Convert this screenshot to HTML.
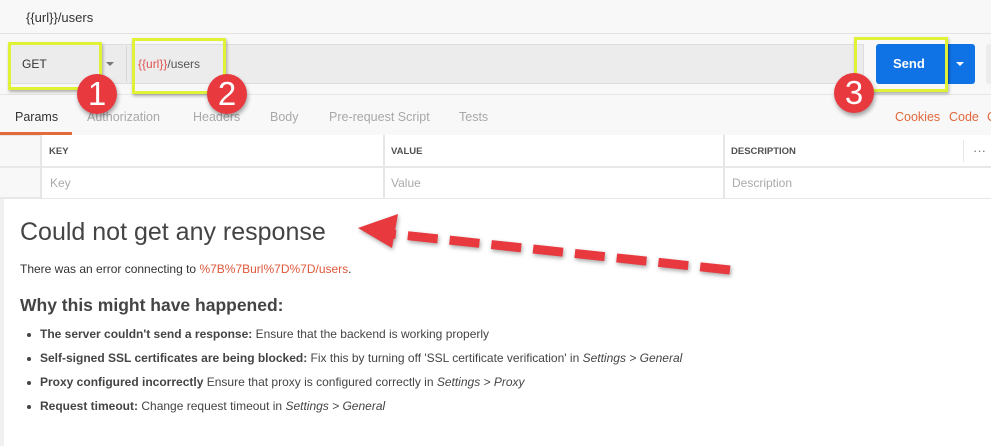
<!DOCTYPE html>
<html><head><meta charset="utf-8"><style>
*{margin:0;padding:0;box-sizing:border-box}
body{width:991px;height:446px;overflow:hidden;background:#fff;font-family:"Liberation Sans",sans-serif;position:relative;color:#333}
.a{position:absolute}
.tab{position:absolute;top:110px;font-size:12.5px;color:#a8a8a8}
.th{position:absolute;top:146px;font-size:9.5px;font-weight:bold;color:#505050}
.ph{position:absolute;top:176px;font-size:12px;color:#aaa}
.vl{position:absolute;width:2px;background:#e6e6e6}
.ybox{position:absolute;border:3px solid #dff236;box-shadow:1px 2px 3px rgba(0,0,0,.3)}
.circ{position:absolute;width:40px;height:40px;border-radius:50%;background:#e8393f;color:#fff;font-size:33px;text-align:center;line-height:40px;box-shadow:1px 3px 4px rgba(0,0,0,.35)}
li{list-style:none;position:absolute;left:29px;font-size:12px;color:#444}
li:before{content:"";position:absolute;left:-2px;top:6px;width:4px;height:4px;border-radius:50%;background:#444}
li span{margin-left:11px}
</style></head><body>
<div class="a" style="left:0;top:0;width:991px;height:199px;background:#f8f8f8"></div>
<div class="a" style="left:0;top:33px;width:991px;height:1px;background:#e2e2e2"></div>
<div class="a" style="left:26px;top:10px;font-size:13px;color:#333">{{url}}/users</div>
<div class="a" style="left:8px;top:44px;width:856px;height:40px;background:#ececec;border:1px solid #ddd"></div>
<div class="a" style="left:126px;top:46px;width:1px;height:36px;background:#d6d6d6"></div>
<div class="a" style="left:22px;top:57px;font-size:12px;color:#333">GET</div>
<div class="a" style="left:106px;top:62px;border-left:4px solid transparent;border-right:4px solid transparent;border-top:4px solid #777"></div>
<div class="a" style="left:138px;top:57px;font-size:12px;color:#555"><span style="color:#e0524f">{{url}}</span>/users</div>
<div class="a" style="left:876px;top:44px;width:99px;height:40px;background:#0f72e5;border-radius:3px"></div>
<div class="a" style="left:948px;top:44px;width:1px;height:40px;background:#0b5fc2"></div>
<div class="a" style="left:893px;top:56px;font-size:13px;font-weight:bold;color:#fff">Send</div>
<div class="a" style="left:956px;top:62px;border-left:4px solid transparent;border-right:4px solid transparent;border-top:4px solid #fff"></div>
<div class="a" style="left:986px;top:44px;width:10px;height:40px;background:#ececec;border-radius:3px"></div>
<div class="a" style="left:0;top:94px;width:991px;height:1px;background:#e6e6e6"></div>
<div class="tab" style="left:15px;color:#333">Params</div>
<div class="a" style="left:0;top:132px;width:72px;height:3px;background:#e46a3c"></div>
<div class="tab" style="left:87px">Authorization</div>
<div class="tab" style="left:193px">Headers</div>
<div class="tab" style="left:270px">Body</div>
<div class="tab" style="left:329px">Pre-request Script</div>
<div class="tab" style="left:459px">Tests</div>
<div class="tab" style="left:895px;color:#e0683b">Cookies</div>
<div class="tab" style="left:949px;color:#e0683b">Code</div>
<div class="tab" style="left:987px;color:#e0683b">C</div>
<div class="a" style="left:0;top:135px;width:991px;height:1px;background:#e6e6e6"></div>
<div class="a" style="left:0;top:166px;width:991px;height:2px;background:#e8e8e8"></div>
<div class="a" style="left:0;top:197px;width:991px;height:2px;background:#e8e8e8"></div>
<div class="a" style="left:40px;top:135px;width:951px;height:63px;background:#fff"></div>
<div class="a" style="left:40px;top:166px;width:951px;height:2px;background:#e8e8e8"></div>
<div class="vl" style="left:40px;top:135px;height:63px"></div>
<div class="vl" style="left:383px;top:135px;height:63px"></div>
<div class="vl" style="left:723px;top:135px;height:63px"></div>
<div class="vl" style="left:963px;top:140px;height:22px;width:1px"></div>
<div class="th" style="left:49px">KEY</div>
<div class="th" style="left:391px">VALUE</div>
<div class="th" style="left:731px">DESCRIPTION</div>
<div class="a" style="left:973px;top:143px;font-size:13px;color:#777">···</div>
<div class="ph" style="left:50px">Key</div>
<div class="ph" style="left:391px">Value</div>
<div class="ph" style="left:732px">Description</div>
<div class="a" style="left:0;top:199px;width:4px;height:247px;background:#f0f0f0"></div>
<div class="a" style="left:20px;top:218px;font-size:25px;color:#444">Could not get any response</div>
<div class="a" style="left:20px;top:262px;font-size:12px;color:#333;white-space:nowrap">There was an error connecting to <span style="color:#e0583b">%7B%7Burl%7D%7D/users</span>.</div>
<div class="a" style="left:20px;top:295px;font-size:17.5px;font-weight:bold;color:#444">Why this might have happened:</div>
<ul>
<li style="top:327px"><span><b>The server couldn't send a response:</b> Ensure that the backend is working properly</span></li>
<li style="top:351px"><span><b>Self-signed SSL certificates are being blocked:</b> Fix this by turning off 'SSL certificate verification' in <i>Settings &gt; General</i></span></li>
<li style="top:375px"><span><b>Proxy configured incorrectly</b> Ensure that proxy is configured correctly in <i>Settings &gt; Proxy</i></span></li>
<li style="top:399px"><span><b>Request timeout:</b> Change request timeout in <i>Settings &gt; General</i></span></li>
</ul>
<svg class="a" style="left:0;top:0" width="991" height="446">
<g style="filter:drop-shadow(1px 2px 2px rgba(0,0,0,.35))">
<line x1="730" y1="270" x2="392" y2="234" stroke="#e8393f" stroke-width="9" stroke-dasharray="30 12"/>
<polygon points="358,228 398,214 392,248" fill="#e8393f"/>
</g>
</svg>
<div class="ybox" style="left:8px;top:42px;width:94px;height:48px"></div>
<div class="ybox" style="left:132px;top:38px;width:94px;height:56px"></div>
<div class="ybox" style="left:854px;top:37px;width:94px;height:55px"></div>
<div class="circ" style="left:77px;top:74px">1</div>
<div class="circ" style="left:207px;top:74px">2</div>
<div class="circ" style="left:834px;top:73px">3</div>
</body></html>
